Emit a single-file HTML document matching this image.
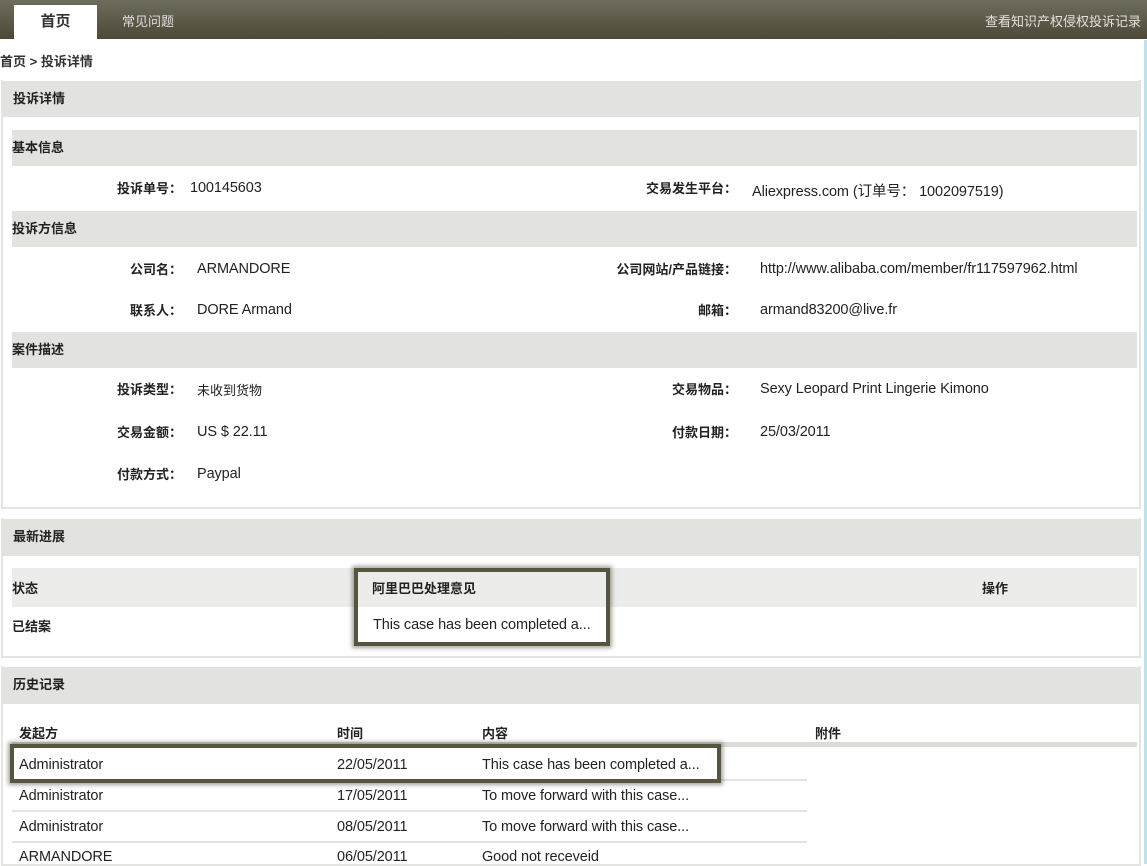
<!DOCTYPE html>
<html><head><meta charset="utf-8"><style>
*{margin:0;padding:0;box-sizing:border-box}
body{width:1147px;height:864px;overflow:hidden;background:#fff;position:relative;font-family:"Liberation Sans","Noto Sans CJK SC",sans-serif;font-size:13px;color:#222}
.a{position:absolute;white-space:nowrap}
.v{font-size:14.5px;letter-spacing:-0.1px}
.top{left:0;top:0;width:1147px;height:39px;background:linear-gradient(#6e6c5c,#4c4938)}
.tab{left:14px;top:5px;width:83px;height:34px;background:#fff;font-size:15px;font-weight:bold;text-align:center;line-height:34px;color:#333}
.panel{border:2px solid #e4e4e2;border-top:none}
.bar{background:#e2e2df;font-weight:bold;font-size:13px;line-height:36px;padding-left:0}
.b{font-weight:bold}
.lbl{text-align:right;font-weight:bold;width:200px}
.hl{border:4px solid #57553f;box-shadow:0 0 4px 2px rgba(60,60,40,.45)}
.ln{height:2px;background:#e4e4e2}
</style></head><body>
<div class="a top"></div>
<div class="a tab">首页</div>
<div class="a" style="left:122px;top:11px;color:#ddd;font-size:13px">常见问题</div>
<div class="a" style="right:6px;top:11px;color:#e2e2dc;font-size:13px">查看知识产权侵权投诉记录</div>
<div class="a" style="left:1144px;top:40px;width:3px;height:824px;background:#bfe1ee"></div>
<div class="a b" style="left:0;top:51px;font-size:13px;color:#333">首页 &gt; 投诉详情</div>

<div class="a panel" style="left:1px;top:80px;width:1140px;height:429px"></div>
<div class="a bar" style="left:2px;top:81px;width:1138px;height:36px;padding-left:11px">投诉详情</div>
<div class="a bar" style="left:12px;top:130px;width:1125px;height:36px">基本信息</div>
<div class="a lbl" style="left:-18px;top:178px">投诉单号：</div>
<div class="a v" style="left:190px;top:180px">100145603</div>
<div class="a lbl" style="left:537px;top:178px">交易发生平台：</div>
<div class="a v" style="left:752px;top:180px">Aliexpress.com (订单号： 1002097519)</div>
<div class="a bar" style="left:12px;top:211px;width:1125px;height:36px">投诉方信息</div>
<div class="a lbl" style="left:-18px;top:259px">公司名：</div>
<div class="a v" style="left:197px;top:261px">ARMANDORE</div>
<div class="a lbl" style="left:-18px;top:300px">联系人：</div>
<div class="a v" style="left:197px;top:302px">DORE Armand</div>
<div class="a lbl" style="left:537px;top:259px">公司网站/产品链接：</div>
<div class="a v" style="left:760px;top:261px">http://www.alibaba.com/member/fr117597962.html</div>
<div class="a lbl" style="left:537px;top:300px">邮箱：</div>
<div class="a v" style="left:760px;top:302px">armand83200@live.fr</div>
<div class="a bar" style="left:12px;top:332px;width:1125px;height:36px">案件描述</div>
<div class="a lbl" style="left:-18px;top:379px">投诉类型：</div>
<div class="a" style="left:197px;top:380px">未收到货物</div>
<div class="a lbl" style="left:-18px;top:422px">交易金额：</div>
<div class="a v" style="left:197px;top:424px">US $ 22.11</div>
<div class="a lbl" style="left:-18px;top:464px">付款方式：</div>
<div class="a v" style="left:197px;top:466px">Paypal</div>
<div class="a lbl" style="left:537px;top:379px">交易物品：</div>
<div class="a v" style="left:760px;top:381px">Sexy Leopard Print Lingerie Kimono</div>
<div class="a lbl" style="left:537px;top:422px">付款日期：</div>
<div class="a v" style="left:760px;top:424px">25/03/2011</div>

<div class="a panel" style="left:1px;top:518px;width:1140px;height:140px"></div>
<div class="a bar" style="left:2px;top:519px;width:1138px;height:37px;padding-left:11px">最新进展</div>
<div class="a" style="left:12px;top:568px;width:1125px;height:39px;background:#ececea"></div>
<div class="a b" style="left:12px;top:578px">状态</div>
<div class="a b" style="left:372px;top:578px">阿里巴巴处理意见</div>
<div class="a b" style="left:982px;top:578px">操作</div>
<div class="a b" style="left:12px;top:616px">已结案</div>
<div class="a v" style="left:373px;top:617px">This case has been completed a...</div>
<div class="a hl" style="left:354px;top:568px;width:256px;height:78px"></div>

<div class="a panel" style="left:1px;top:666px;width:1140px;height:200px"></div>
<div class="a bar" style="left:2px;top:667px;width:1138px;height:37px;padding-left:11px">历史记录</div>
<div class="a b" style="left:19px;top:723px">发起方</div>
<div class="a b" style="left:337px;top:723px">时间</div>
<div class="a b" style="left:482px;top:723px">内容</div>
<div class="a b" style="left:815px;top:723px">附件</div>
<div class="a" style="left:12px;top:742px;width:1125px;height:5px;background:#dcdcd8"></div>
<div class="a v" style="left:19px;top:757px">Administrator</div><div class="a v" style="left:337px;top:757px">22/05/2011</div><div class="a v" style="left:482px;top:757px">This case has been completed a...</div>
<div class="a ln" style="left:12px;top:779px;width:795px"></div>
<div class="a v" style="left:19px;top:788px">Administrator</div><div class="a v" style="left:337px;top:788px">17/05/2011</div><div class="a v" style="left:482px;top:788px">To move forward with this case...</div>
<div class="a ln" style="left:12px;top:810px;width:795px"></div>
<div class="a v" style="left:19px;top:819px">Administrator</div><div class="a v" style="left:337px;top:819px">08/05/2011</div><div class="a v" style="left:482px;top:819px">To move forward with this case...</div>
<div class="a ln" style="left:12px;top:841px;width:795px"></div>
<div class="a v" style="left:19px;top:849px">ARMANDORE</div><div class="a v" style="left:337px;top:849px">06/05/2011</div><div class="a v" style="left:482px;top:849px">Good not receveid</div>
<div class="a hl" style="left:10px;top:744px;width:711px;height:39px"></div>
</body></html>
